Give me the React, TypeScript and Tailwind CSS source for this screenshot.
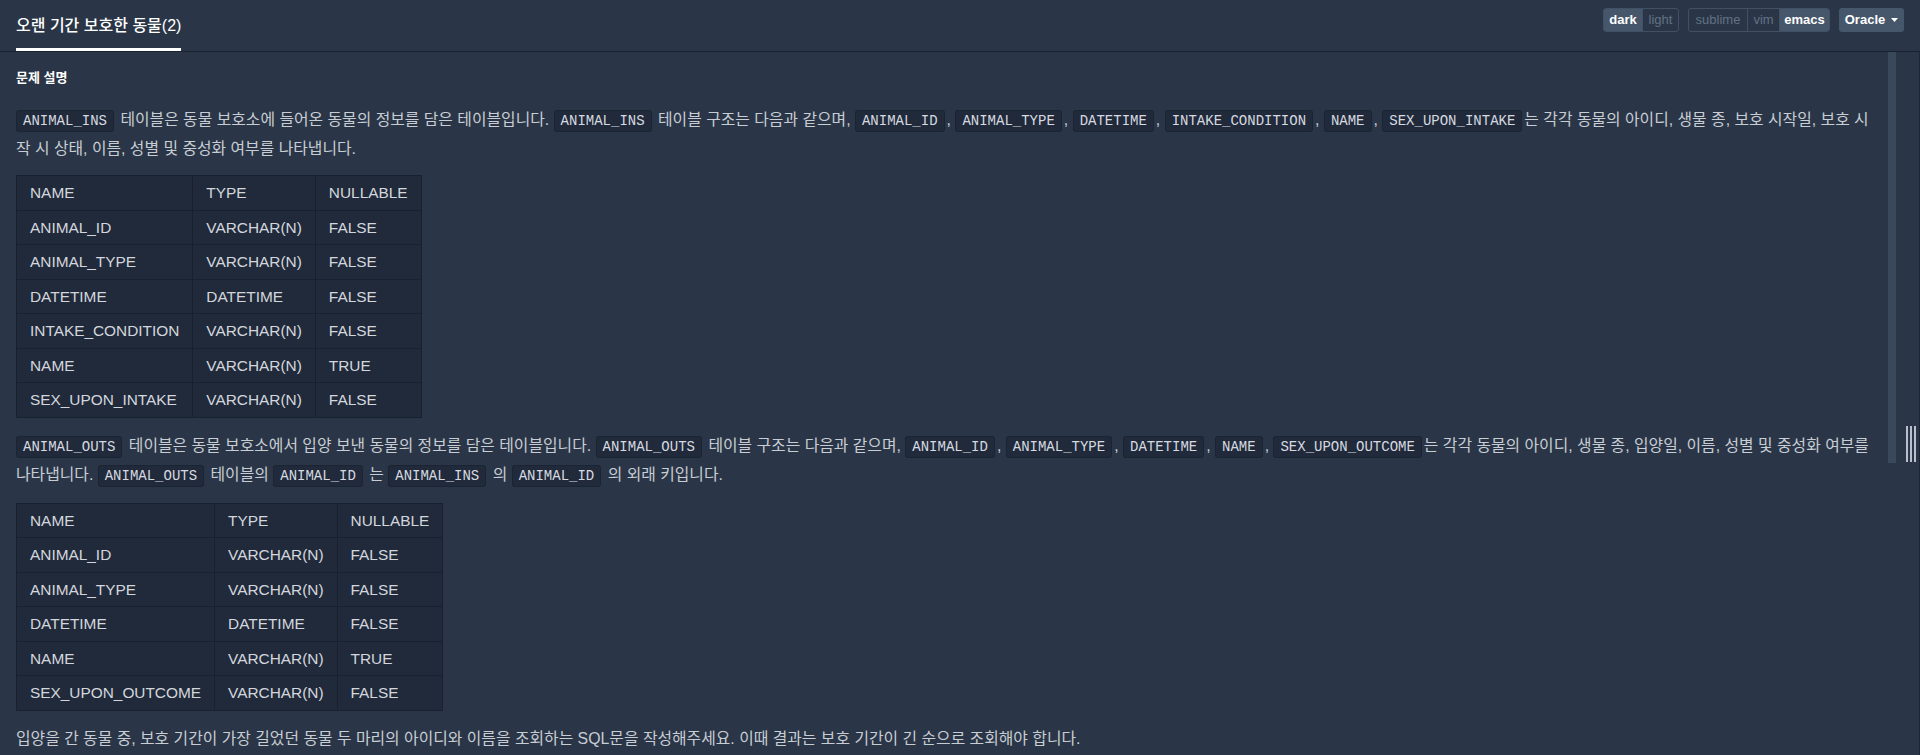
import React from "react"

type Col = { name: string; type: string; nullable: string }

const insCols: Col[] = [
  { name: "ANIMAL_ID", type: "VARCHAR(N)", nullable: "FALSE" },
  { name: "ANIMAL_TYPE", type: "VARCHAR(N)", nullable: "FALSE" },
  { name: "DATETIME", type: "DATETIME", nullable: "FALSE" },
  { name: "INTAKE_CONDITION", type: "VARCHAR(N)", nullable: "FALSE" },
  { name: "NAME", type: "VARCHAR(N)", nullable: "TRUE" },
  { name: "SEX_UPON_INTAKE", type: "VARCHAR(N)", nullable: "FALSE" },
]

const outsCols: Col[] = [
  { name: "ANIMAL_ID", type: "VARCHAR(N)", nullable: "FALSE" },
  { name: "ANIMAL_TYPE", type: "VARCHAR(N)", nullable: "FALSE" },
  { name: "DATETIME", type: "DATETIME", nullable: "FALSE" },
  { name: "NAME", type: "VARCHAR(N)", nullable: "TRUE" },
  { name: "SEX_UPON_OUTCOME", type: "VARCHAR(N)", nullable: "FALSE" },
]

function Code({ children }: { children: React.ReactNode }) {
  return (
    <code className="mr-[2px] rounded-[3px] border border-[#1b2432] bg-[#212a3a] px-[6px] py-[2px] font-['Liberation_Mono',monospace] text-[14px] text-[#d6dae0]">
      {children}
    </code>
  )
}

function SchemaTable({ rows }: { rows: Col[] }) {
  const cell = "border border-[#182130] px-[13px] py-[7px] leading-[19.5px] text-left font-normal"
  return (
    <table className="mt-[13px] mb-[14px] border-collapse bg-[#212a3b] text-[15.4px] text-[#d3d7dd]">
      <thead>
        <tr>
          <th className={cell}>NAME</th>
          <th className={cell}>TYPE</th>
          <th className={cell}>NULLABLE</th>
        </tr>
      </thead>
      <tbody>
        {rows.map((r) => (
          <tr key={r.name}>
            <td className={cell}>{r.name}</td>
            <td className={cell}>{r.type}</td>
            <td className={cell}>{r.nullable}</td>
          </tr>
        ))}
      </tbody>
    </table>
  )
}

function Segmented({ items }: { items: { label: string; width: string; active?: boolean }[] }) {
  return (
    <div className="flex h-[24px] overflow-hidden rounded-[3px] border border-[#415064]">
      {items.map((it, i) => (
        <span
          key={it.label}
          className={
            "flex items-center justify-center text-[13px] " +
            it.width +
            (i > 0 ? " border-l border-[#415064]" : "") +
            (it.active ? " bg-[#46566b] font-semibold text-white" : " text-[#627184]")
          }
        >
          {it.label}
        </span>
      ))}
    </div>
  )
}

export default function App() {
  return (
    <div className="flex h-[755px] w-full flex-col overflow-hidden bg-[#2a3647] font-['Liberation_Sans','Noto_Sans_CJK_KR',sans-serif]">
      <header className="flex h-[52px] shrink-0 items-stretch justify-between border-b border-[#19222f] px-4">
        <div className="flex items-center border-b-[3px] border-white pt-[3px]">
          <span className="text-[16px] font-medium text-white">오랜 기간 보호한 동물(2)</span>
        </div>
        <div className="flex items-start gap-[9px] pt-[8px]">
          <Segmented
            items={[
              { label: "dark", width: "w-[38px]", active: true },
              { label: "light", width: "w-[36px]" },
            ]}
          />
          <Segmented
            items={[
              { label: "sublime", width: "w-[58px]" },
              { label: "vim", width: "w-[32px]" },
              { label: "emacs", width: "w-[50px]", active: true },
            ]}
          />
          <button className="flex h-[24px] w-[65px] items-center justify-center gap-[6px] rounded-[3px] bg-[#46566b] text-[13px] font-semibold text-white">
            Oracle
            <svg width="7" height="4" viewBox="0 0 7 4" fill="currentColor">
              <path d="M0 0h7L3.5 4z" />
            </svg>
          </button>
        </div>
      </header>

      <div className="flex min-h-0 flex-1">
        <main className="min-w-0 flex-1 px-4 pt-[16px] text-[15.85px] leading-[27px] text-[#c8cdd4]">
          <h5 className="mb-[18px] text-[13px] font-bold leading-[20px] text-white">문제 설명</h5>

          <p>
            <Code>ANIMAL_INS</Code> 테이블은 동물 보호소에 들어온 동물의 정보를 담은 테이블입니다. <Code>ANIMAL_INS</Code> 테이블 구조는
            다음과 같으며, <Code>ANIMAL_ID</Code>, <Code>ANIMAL_TYPE</Code>, <Code>DATETIME</Code>, <Code>INTAKE_CONDITION</Code>,{" "}
            <Code>NAME</Code>, <Code>SEX_UPON_INTAKE</Code>는 각각 동물의 아이디, 생물 종, 보호 시작일, 보호 시작 시 상태, 이름, 성별 및
            중성화 여부를 나타냅니다.
          </p>

          <SchemaTable rows={insCols} />

          <p>
            <Code>ANIMAL_OUTS</Code> 테이블은 동물 보호소에서 입양 보낸 동물의 정보를 담은 테이블입니다. <Code>ANIMAL_OUTS</Code> 테이블
            구조는 다음과 같으며, <Code>ANIMAL_ID</Code>, <Code>ANIMAL_TYPE</Code>, <Code>DATETIME</Code>, <Code>NAME</Code>,{" "}
            <Code>SEX_UPON_OUTCOME</Code>는 각각 동물의 아이디, 생물 종, 입양일, 이름, 성별 및 중성화 여부를 나타냅니다.{" "}
            <Code>ANIMAL_OUTS</Code> 테이블의 <Code>ANIMAL_ID</Code> 는 <Code>ANIMAL_INS</Code> 의 <Code>ANIMAL_ID</Code> 의 외래
            키입니다.
          </p>

          <SchemaTable rows={outsCols} />

          <p>
            입양을 간 동물 중, 보호 기간이 가장 길었던 동물 두 마리의 아이디와 이름을 조회하는 SQL문을 작성해주세요. 이때 결과는 보호
            기간이 긴 순으로 조회해야 합니다.
          </p>
        </main>

        <div className="w-[8px] shrink-0">
          <div className="h-[411px] bg-[#3a485c]" />
        </div>

        <div className="flex w-[24px] shrink-0 items-start border-r border-[#1d2633] pl-[10px] pt-[374px]">
          <div className="flex h-[36px] gap-[2px]">
            <span className="w-[2px] bg-[#b8c1cb]" />
            <span className="w-[2px] bg-[#b8c1cb]" />
            <span className="w-[2px] bg-[#b8c1cb]" />
          </div>
        </div>
      </div>
    </div>
  )
}
